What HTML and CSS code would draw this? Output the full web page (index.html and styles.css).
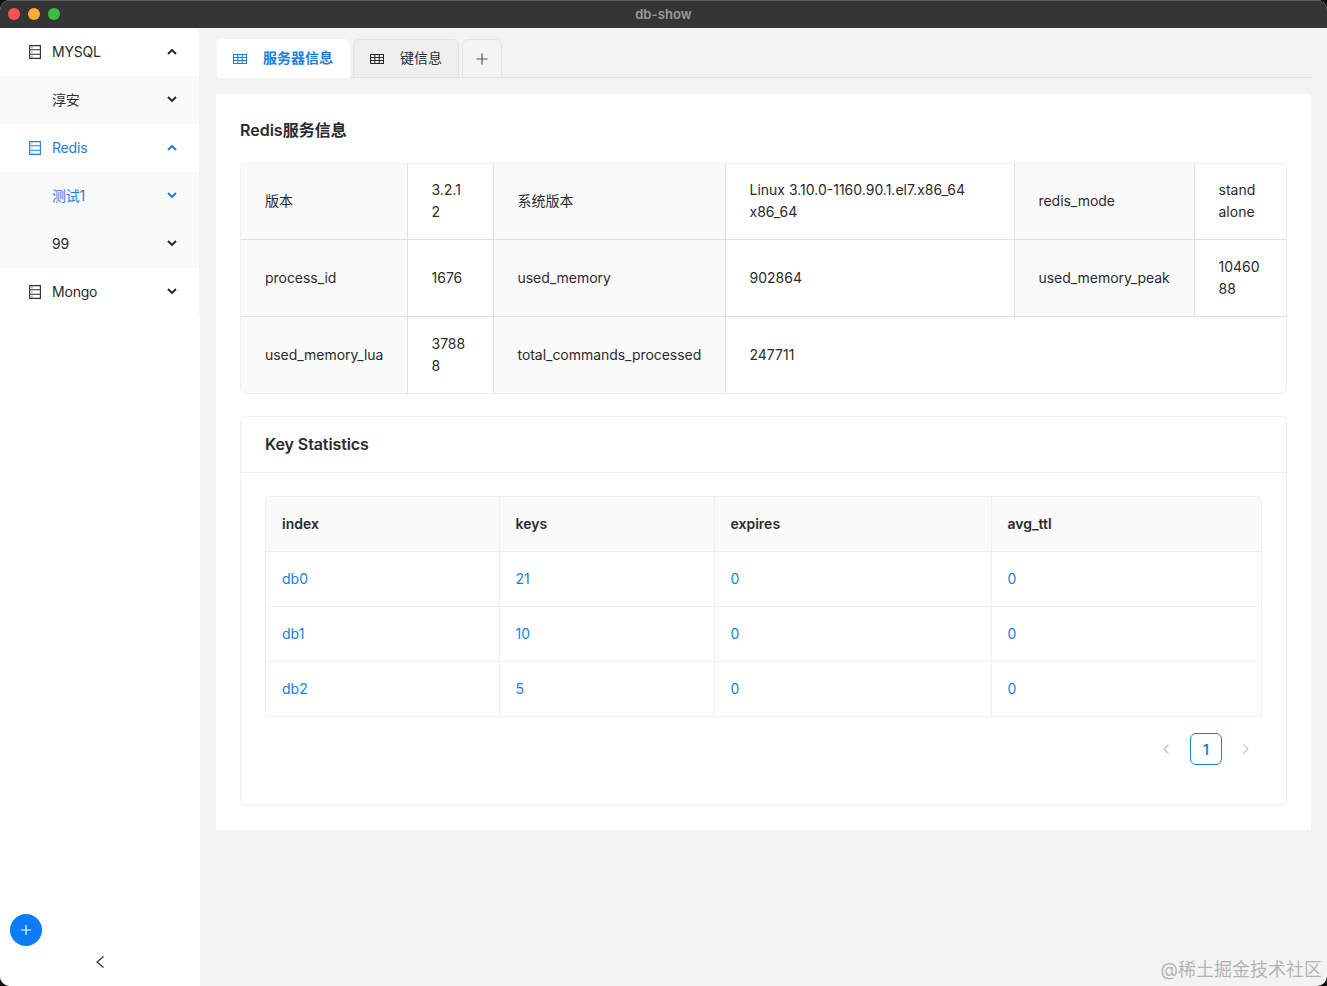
FILE: index.html
```html
<!DOCTYPE html>
<html lang="zh-CN">
  <head>
    <meta charset="UTF-8" />
    <title>db-show</title>
    <link rel="stylesheet" href="styles.css">
  </head>
  <body>
    <div class="window">
      <div class="titlebar">
        <div class="lights">
          <span class="light red"></span>
          <span class="light yellow"></span>
          <span class="light green"></span>
        </div>
        <span class="title">db-show</span>
      </div>

      <div class="app">
        <div class="sidebar">
          <div class="menu">
            <div class="menu-item">
              <svg class="server-icon" viewBox="0 0 12 14"><path d="M.6.6h10.8v12.8H.6zM.6 4.8h10.8M.6 9.2h10.8M2.4 2.7h1M2.4 7h1M2.4 11.3h1"/></svg>
              <span class="menu-text">MYSQL</span>
              <svg class="chevron" viewBox="0 0 10 6"><path d="M1 5l4-4 4 4"/></svg>
            </div>
            <div class="menu-group">
              <div class="menu-item">
                <span class="menu-text sub">淳安</span>
                <svg class="chevron down" viewBox="0 0 10 6"><path d="M1 1l4 4 4-4"/></svg>
              </div>
            </div>
            <div class="menu-item active">
              <svg class="server-icon" viewBox="0 0 12 14"><path d="M.6.6h10.8v12.8H.6zM.6 4.8h10.8M.6 9.2h10.8M2.4 2.7h1M2.4 7h1M2.4 11.3h1"/></svg>
              <span class="menu-text">Redis</span>
              <svg class="chevron" viewBox="0 0 10 6"><path d="M1 5l4-4 4 4"/></svg>
            </div>
            <div class="menu-group">
              <div class="menu-item active">
                <span class="menu-text sub">测试1</span>
                <svg class="chevron down" viewBox="0 0 10 6"><path d="M1 1l4 4 4-4"/></svg>
              </div>
              <div class="menu-item">
                <span class="menu-text sub">99</span>
                <svg class="chevron down" viewBox="0 0 10 6"><path d="M1 1l4 4 4-4"/></svg>
              </div>
            </div>
            <div class="menu-item">
              <svg class="server-icon" viewBox="0 0 12 14"><path d="M.6.6h10.8v12.8H.6zM.6 4.8h10.8M.6 9.2h10.8M2.4 2.7h1M2.4 7h1M2.4 11.3h1"/></svg>
              <span class="menu-text">Mongo</span>
              <svg class="chevron down" viewBox="0 0 10 6"><path d="M1 1l4 4 4-4"/></svg>
            </div>
          </div>

          <div class="sidebar-foot">
            <div class="add-btn">
              <svg viewBox="0 0 12 12"><path d="M6 1v10M1 6h10"/></svg>
            </div>
            <div class="collapse-btn">
              <svg viewBox="0 0 8 12"><path d="M7.500.5L1 6l6.500 5.500"/></svg>
            </div>
          </div>
        </div>

        <div class="main">
          <div class="tabs">
            <div class="tab current">
              <svg class="table-icon" viewBox="0 0 14 10"><path d="M.5.5h13v9H.5zM.5 3.500h13M.5 6.500h13M4.800.5v9M9.200.5v9"/></svg>
              <span class="tab-text">服务器信息</span>
            </div>
            <div class="tab">
              <svg class="table-icon" viewBox="0 0 14 10"><path d="M.5.5h13v9H.5zM.5 3.500h13M.5 6.500h13M4.800.5v9M9.200.5v9"/></svg>
              <span class="tab-text">键信息</span>
            </div>
            <div class="tab add-tab">
              <svg viewBox="0 0 12 12"><path d="M6 .5v11M.5 6h11"/></svg>
            </div>
          </div>

          <div class="content">
            <h2 class="page-title">Redis服务信息</h2>

            <div class="desc-wrap">
              <table class="desc-table">
                <colgroup>
                  <col class="d1"><col class="d2"><col class="d3"><col class="d4"><col class="d5"><col class="d6">
                </colgroup>
                <tr>
                  <th>版本</th>
                  <td>3.2.12</td>
                  <th>系统版本</th>
                  <td>Linux 3.10.0-1160.90.1.el7.x86_64 x86_64</td>
                  <th>redis_mode</th>
                  <td>standalone</td>
                </tr>
                <tr>
                  <th>process_id</th>
                  <td>1676</td>
                  <th>used_memory</th>
                  <td>902864</td>
                  <th>used_memory_peak</th>
                  <td>1046088</td>
                </tr>
                <tr>
                  <th>used_memory_lua</th>
                  <td>37888</td>
                  <th>total_commands_processed</th>
                  <td colspan="3">247711</td>
                </tr>
              </table>
            </div>

            <div class="stats-card">
              <div class="stats-head"><span class="stats-title">Key Statistics</span></div>
              <div class="stats-body">
                <div class="data-wrap">
                  <table class="data-table">
                    <colgroup>
                      <col class="k1"><col class="k2"><col class="k3"><col class="k4">
                    </colgroup>
                    <thead>
                      <tr><th>index</th><th>keys</th><th>expires</th><th>avg_ttl</th></tr>
                    </thead>
                    <tbody>
                      <tr><td>db0</td><td>21</td><td>0</td><td>0</td></tr>
                      <tr><td>db1</td><td>10</td><td>0</td><td>0</td></tr>
                      <tr><td>db2</td><td>5</td><td>0</td><td>0</td></tr>
                    </tbody>
                  </table>
                </div>
                <div class="pager">
                  <svg class="pager-arrow" viewBox="0 0 8 12"><path d="M6.500 1.500L2 6l4.500 4.500"/></svg>
                  <span class="pager-num">1</span>
                  <svg class="pager-arrow" viewBox="0 0 8 12"><path d="M1.500 1.500L6 6l-4.500 4.500"/></svg>
                </div>
              </div>
            </div>
          </div>
        </div>
      </div>

      <div class="watermark">@稀土掘金技术社区</div>
    </div>
  </body>
</html>
```

FILE: styles.css
```css
:root {
  --blue: #1a7fe0;
  --text: #2b2b2d;
  --line: #efeff1;
  --line-dark: #e0e0e2;
}

* {
  box-sizing: border-box;
}

html,
body {
  height: 100%;
}

body {
  margin: 0;
  background: #111;
  font-family: Inter, "Noto Sans CJK SC", sans-serif;
  font-size: 14px;
  color: var(--text);
  overflow: hidden;
}

.window {
  position: relative;
  height: 100%;
  display: flex;
  flex-direction: column;
  border-radius: 10px;
  overflow: hidden;
  background: #f3f3f4;
}

.titlebar {
  position: relative;
  flex: none;
  height: 28px;
  display: flex;
  align-items: center;
  justify-content: center;
  background: #353535;
  border-top: 1px solid #5c5c5c;
}

.lights {
  position: absolute;
  left: 8px;
  top: 7px;
  display: flex;
  gap: 8px;
}

.light {
  width: 12px;
  height: 12px;
  border-radius: 50%;
}

.red { background: #fb5450; }
.yellow { background: #fcae2d; }
.green { background: #35c03f; }

.title {
  margin-bottom: 2px;
  font-size: 13px;
  font-weight: 600;
  letter-spacing: 0.1px;
  color: #9c9c9c;
}

.app {
  flex: 1;
  display: flex;
  min-height: 0;
}

.sidebar {
  width: 200px;
  flex: none;
  display: flex;
  flex-direction: column;
  justify-content: space-between;
  background: #fff;
}

.menu {
  border-right: 1px solid #f3f3f4;
}

.menu-group {
  background: #fafafb;
}

.menu-item {
  height: 48px;
  display: flex;
  align-items: center;
  padding: 0 22px 0 29px;
}

.menu-text {
  flex: 1;
  margin-left: 11px;
  margin-bottom: 2px;
  letter-spacing: -0.2px;
}

.menu-text.sub {
  margin-left: 23px;
}

.server-icon {
  width: 12px;
  height: 14px;
  fill: none;
  stroke: currentColor;
  stroke-width: 1.1;
}

.chevron {
  width: 10px;
  height: 6px;
  fill: none;
  stroke: currentColor;
  stroke-width: 2;
}

.chevron.down {
  margin-bottom: 2px;
}

.active {
  color: var(--blue);
}

.sidebar-foot {
  padding-bottom: 18px;
}

.add-btn {
  width: 32px;
  height: 32px;
  margin: 0 0 10px 10px;
  display: flex;
  align-items: center;
  justify-content: center;
  border-radius: 50%;
  background: #0a7cf5;
}

.add-btn svg {
  width: 12px;
  height: 12px;
  fill: none;
  stroke: #fff;
  stroke-width: 1.2;
}

.collapse-btn {
  display: flex;
  justify-content: center;
}

.collapse-btn svg {
  width: 8px;
  height: 12px;
  fill: none;
  stroke: #333;
  stroke-width: 1.2;
}

.main {
  flex: 1;
  min-width: 0;
  padding: 11px 16px 0;
}

.tabs {
  height: 39px;
  display: flex;
  gap: 3px;
  margin-bottom: 16px;
  padding-left: 1px;
  border-bottom: 1px solid #e4e4e6;
}

.tab {
  height: 39px;
  display: flex;
  align-items: center;
  gap: 16px;
  padding: 0 16px;
  border: 1px solid #e4e4e6;
  border-radius: 6px 6px 0 0;
  background: #efeff0;
  white-space: nowrap;
}

.tab-text {
  margin-bottom: 3px;
}

.tab.current {
  width: 133px;
  border-color: #fff;
  background: #fff;
  color: var(--blue);
  font-weight: 600;
  padding: 0 15px;
}

.add-tab {
  width: 40px;
  padding: 0;
  justify-content: center;
  background: #f4f4f5;
}

.add-tab svg {
  width: 12px;
  height: 12px;
  fill: none;
  stroke: #555;
  stroke-width: 1.2;
}

.table-icon {
  width: 14px;
  height: 10px;
  flex: none;
  fill: none;
  stroke: currentColor;
  stroke-width: 1.1;
}

.content {
  height: 736px;
  padding: 24px;
  background: #fff;
}

.page-title {
  margin: 0 0 21px;
  height: 24px;
  font-size: 16px;
  line-height: 24px;
  font-weight: 600;
}

.desc-wrap {
  border: 1px solid var(--line);
  border-radius: 6px;
  overflow: hidden;
  margin-bottom: 22px;
}

.desc-table,
.data-table {
  width: 100%;
  table-layout: fixed;
  border-collapse: collapse;
}

.d1 { width: 166px; }
.d2 { width: 86px; }
.d3 { width: 232px; }
.d4 { width: 289px; }
.d5 { width: 180px; }
.d6 { width: 92px; }

.desc-table th,
.desc-table td {
  height: 77px;
  padding: 0 24px;
  border: 1px solid var(--line-dark);
  font-weight: 400;
  line-height: 22px;
  text-align: left;
  overflow-wrap: anywhere;
}

.desc-table th {
  background: #fafafa;
  white-space: nowrap;
  letter-spacing: -0.04px;
}

.desc-table tr:first-child th,
.desc-table tr:first-child td {
  height: 75px;
  border-top: 0;
}

.desc-table tr:last-child th,
.desc-table tr:last-child td {
  border-bottom: 0;
}

.desc-table tr > :first-child {
  border-left: 0;
}

.desc-table tr > :last-child {
  border-right: 0;
}

.stats-card {
  height: 390px;
  border: 1px solid var(--line);
  border-radius: 6px;
}

.stats-head {
  height: 56px;
  padding: 0 24px;
  display: flex;
  align-items: center;
  border-bottom: 1px solid var(--line);
  font-size: 16px;
  font-weight: 600;
  letter-spacing: -0.1px;
}

.stats-title {
  margin-bottom: 2px;
}

.stats-body {
  padding: 23px 24px 0;
}

.data-wrap {
  border: 1px solid var(--line);
  border-radius: 4px;
  overflow: hidden;
}

.k1 { width: 233px; }
.k2 { width: 215px; }
.k3 { width: 277px; }
.k4 { width: 272px; }

.data-table th,
.data-table td {
  height: 55px;
  padding: 0 16px;
  border: 1px solid var(--line);
  text-align: left;
}

.data-table th {
  height: 54px;
  padding-bottom: 1px;
  background: #fafafa;
  font-weight: 600;
}

.data-table td {
  color: var(--blue);
}

.data-table tr > :first-child {
  border-left: 0;
}

.data-table tr > :last-child {
  border-right: 0;
}

.data-table thead th {
  border-top: 0;
}

.data-table tbody tr:last-child td {
  border-bottom: 0;
}

.pager {
  display: flex;
  align-items: center;
  justify-content: flex-end;
  gap: 16px;
  margin-top: 16px;
  padding-right: 8px;
}

.pager-arrow {
  width: 16px;
  height: 12px;
  fill: none;
  stroke: #c2c2c4;
  stroke-width: 1.1;
}

.pager-num {
  width: 32px;
  height: 32px;
  display: flex;
  align-items: center;
  justify-content: center;
  border: 1px solid var(--blue);
  border-radius: 6px;
  color: var(--blue);
  font-weight: 600;
}

.watermark {
  position: absolute;
  right: 5px;
  bottom: 4px;
  font-size: 18px;
  line-height: 24px;
  color: #b4b4b4;
}
```
